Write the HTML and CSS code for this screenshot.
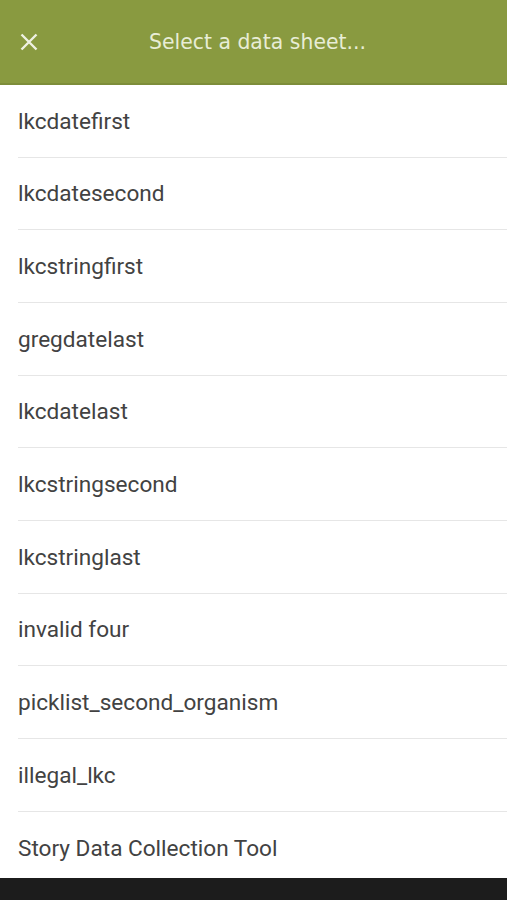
FILE: index.html
```html
<!DOCTYPE html>
<html>
<head>
<meta charset="utf-8">
<link rel="stylesheet" href="styles.css">
</head>
<body>
<div class="screen">
  <header class="topbar">
    <button class="close" aria-label="Close">
      <svg width="18" height="18" viewBox="0 0 18 18"><path d="M1.5 1.5 L16.5 16.5 M16.5 1.5 L1.5 16.5" stroke="#eef1e2" stroke-width="2.4" stroke-linecap="butt" fill="none"/></svg>
    </button>
    <h1 class="title">Select a data sheet...</h1>
  </header>
  <ul class="list">
    <li class="item">lkcdatefirst</li>
    <li class="item">lkcdatesecond</li>
    <li class="item">lkcstringfirst</li>
    <li class="item">gregdatelast</li>
    <li class="item">lkcdatelast</li>
    <li class="item">lkcstringsecond</li>
    <li class="item">lkcstringlast</li>
    <li class="item">invalid four</li>
    <li class="item">picklist_second_organism</li>
    <li class="item">illegal_lkc</li>
    <li class="item last">Story Data Collection Tool</li>
  </ul>
  <div class="navbar"></div>
</div>
</body>
</html>
```
FILE: styles.css
```css
* { box-sizing: border-box; }
html, body { margin: 0; padding: 0; background: #ffffff; }
.screen {
  width: 507px;
  height: 900px;
  display: flex;
  flex-direction: column;
  overflow: hidden;
}
.topbar {
  height: 85px;
  flex: none;
  background: #899a40;
  border-bottom: 2px solid #7d8d3a;
  display: flex;
  align-items: center;
}
.close {
  background: none;
  border: 0;
  padding: 0;
  margin: 1px 0 0 20px;
  width: 18px;
  height: 18px;
  display: flex;
}
.title {
  flex: 1;
  margin: 0;
  padding-right: 30px;
  padding-top: 1px;
  text-align: center;
  font-family: "DejaVu Sans", sans-serif;
  font-weight: 400;
  font-size: 20.4px;
  color: #e8edd6;
}
.list {
  list-style: none;
  margin: 0;
  padding: 0;
  flex: 1;
}
.item {
  height: 72.67px;
  margin-left: 18px;
  border-bottom: 1px solid #e6e6e6;
  display: flex;
  align-items: center;
  font-family: Roboto, "Liberation Sans", sans-serif;
  font-size: 22.6px;
  color: #424242;
  padding-top: 1px;
}
.item.last {
  border-bottom: 0;
  height: 66px;
  padding-top: 8px;
}
.navbar {
  height: 22px;
  flex: none;
  background: #1c1c1c;
}
```
